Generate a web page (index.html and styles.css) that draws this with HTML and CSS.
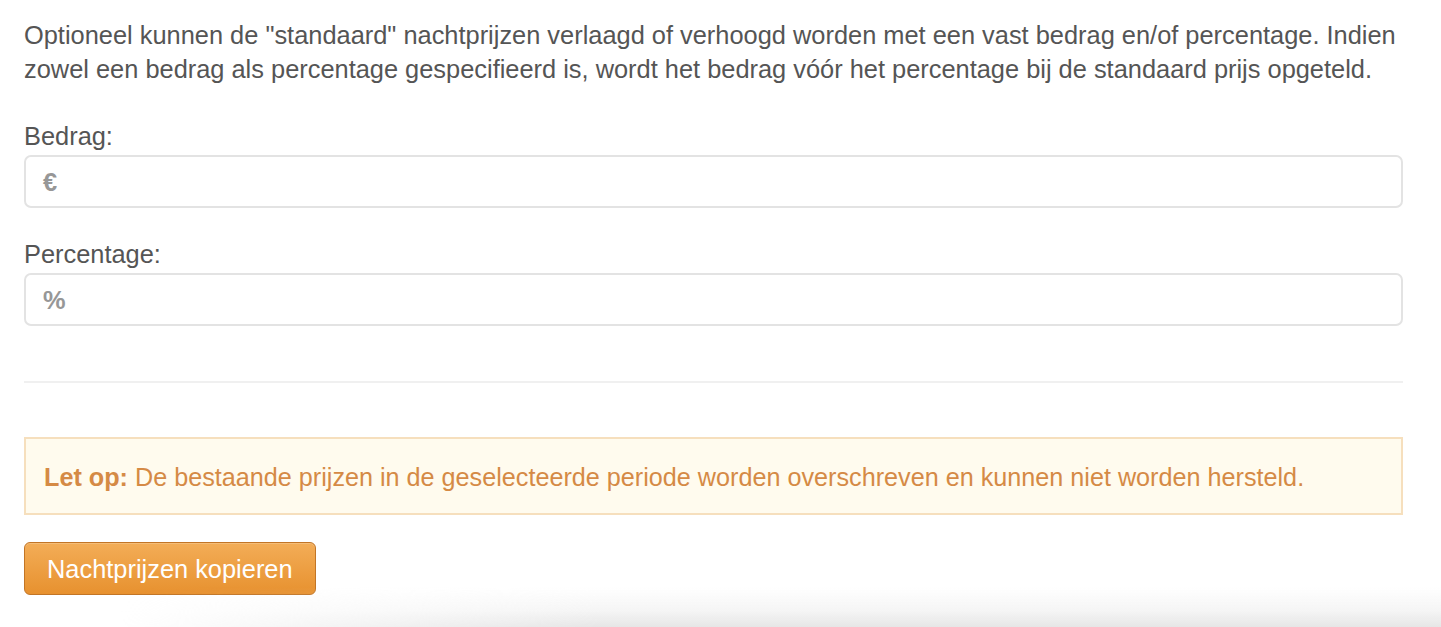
FILE: index.html
```html
<!DOCTYPE html>
<html lang="nl">
<head>
<meta charset="utf-8">
<title>Nachtprijzen kopiëren</title>
<link rel="stylesheet" href="styles.css">
</head>
<body>
<div class="page">
  <p class="intro">Optioneel kunnen de "standaard" nachtprijzen verlaagd of verhoogd worden met een vast bedrag en/of percentage. Indien zowel een bedrag als percentage gespecifieerd is, wordt het bedrag vóór het percentage bij de standaard prijs opgeteld.</p>

  <div class="field field-first">
    <label class="label" for="bedrag">Bedrag:</label>
    <div class="input">
      <span class="addon addon-bold">€</span>
      <input id="bedrag" class="control" type="text">
    </div>
  </div>

  <div class="field">
    <label class="label" for="percentage">Percentage:</label>
    <div class="input">
      <span class="addon addon-bold">%</span>
      <input id="percentage" class="control" type="text">
    </div>
  </div>

  <hr class="divider">

  <div class="alert"><strong>Let op:</strong> De bestaande prijzen in de geselecteerde periode worden overschreven en kunnen niet worden hersteld.</div>

  <button class="btn" type="button">Nachtprijzen kopieren</button>
</div>
<div class="fade"></div>
</body>
</html>
```

FILE: styles.css
```css
html, body {
  margin: 0;
  padding: 0;
  background: #ffffff;
}

body {
  font-family: "Liberation Sans", Arial, Helvetica, sans-serif;
  font-size: 25.4px;
  line-height: 34px;
  color: #555555;
  height: 627px;
  overflow: hidden;
  position: relative;
}

.page {
  padding: 18px 38px 0 24px;
}

.intro {
  margin: 0;
}

.field {
  margin-top: 29px;
}

.field-first {
  margin-top: 33px;
}

.label {
  display: block;
  margin-bottom: 2px;
}

.input {
  display: flex;
  align-items: center;
  height: 53px;
  box-sizing: border-box;
  border: 2px solid #e3e3e3;
  border-radius: 7px;
  background: #fff;
  padding-left: 17px;
}

.addon {
  color: #979797;
  width: 22px;
}

.addon-bold {
  font-weight: bold;
}

.control {
  flex: 1;
  border: 0;
  outline: 0;
  background: transparent;
  font: inherit;
  height: 100%;
  padding: 0 8px;
}

.divider {
  margin: 55px 0 0;
  border: 0;
  height: 2px;
  background: #f0f0f0;
}

.alert {
  margin-top: 54px;
  border: 2px solid #f6dfbd;
  background: #fffbee;
  color: #d58a45;
  padding: 21px 18px 19px;
  font-size: 25.2px;
}

.alert strong {
  font-weight: bold;
}

.btn {
  display: block;
  margin-top: 27px;
  height: 53px;
  padding: 0 22px;
  font: inherit;
  color: #ffffff;
  border: 1px solid #c27526;
  border-radius: 6px;
  background: linear-gradient(to bottom, #f3ad57 0%, #e7912f 100%);
  box-shadow: inset 0 1px 0 rgba(255, 255, 255, 0.2);
  cursor: pointer;
}

.fade {
  position: absolute;
  left: 0;
  right: 0;
  bottom: 0;
  height: 40px;
  background: linear-gradient(to bottom, rgba(235, 235, 235, 0) 0%, rgba(235, 235, 235, 0.5) 60%, rgba(230, 230, 230, 1) 100%);
  -webkit-mask-image: linear-gradient(to right, transparent 0, transparent 120px, #000 600px);
  mask-image: linear-gradient(to right, transparent 0, transparent 120px, #000 600px);
  pointer-events: none;
}
```
